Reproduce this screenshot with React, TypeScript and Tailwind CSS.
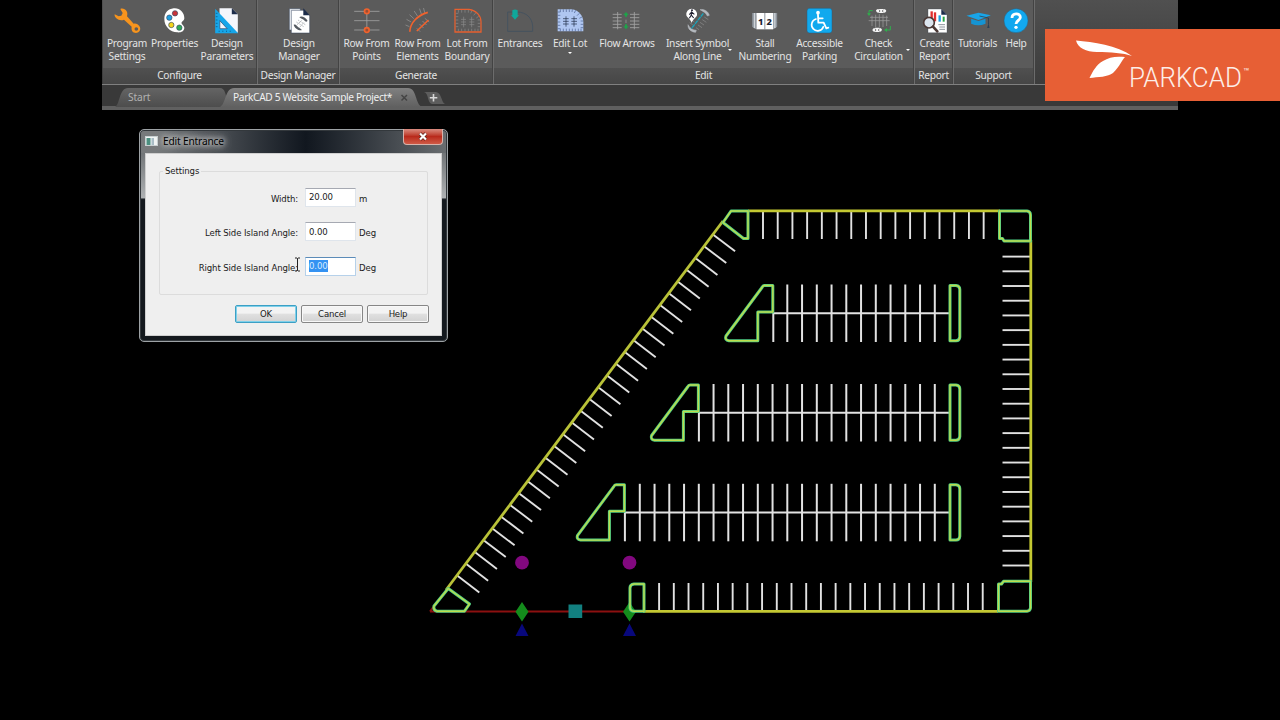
import React from "react";

type Drawing = { vx: number; children?: React.ReactNode };

/* Ribbon glyphs share a 90x84 drawing grid shown at 30x28. */
function Glyph({ vx, children }: Drawing) {
  return (
    <svg width="30" height="28" viewBox={`${vx} 18 90 84`} className="block shrink-0 overflow-visible" fill="none">
      {children}
    </svg>
  );
}

const ticks = (n: number) => Array.from({ length: n }, (_, i) => i);

function Tool({
  width,
  lines,
  caret,
  children,
}: {
  width: string;
  lines: string[];
  caret?: "below" | "side";
  children: React.ReactNode;
}) {
  return (
    <div className={`relative flex shrink-0 flex-col items-center pt-1.5 ${width}`}>
      {children}
      <div className="mt-[3px] flex flex-col items-center text-[10.2px] leading-[13px] tracking-[-0.24px] whitespace-nowrap text-[#e4e4e4]">
        {lines.map((l) => (
          <span key={l}>{l}</span>
        ))}
      </div>
      {caret === "below" && (
        <span className="mt-[2px] border-x-[2.5px] border-t-[2.5px] border-x-transparent border-t-white" />
      )}
      {caret === "side" && (
        <span className="absolute top-[49px] right-[3px] border-x-[2.5px] border-t-[2.5px] border-x-transparent border-t-white" />
      )}
    </div>
  );
}

function Panel({ title, width, children }: { title: string; width: string; children: React.ReactNode }) {
  return (
    <div className={`flex h-[84px] shrink-0 flex-col border-r border-[#6c6c6c] ${width}`}>
      <div className="flex h-[68px] border-r border-[#434343] bg-[#5b5b5b]">{children}</div>
      <div className="flex h-4 items-center justify-center border-r border-[#434343] bg-linear-to-b from-[#505050] to-[#464646] text-[10.2px] tracking-[-0.3px] whitespace-nowrap text-[#e4e4e4]">
        {title}
      </div>
    </div>
  );
}

function Ribbon() {
  return (
    <div className="flex h-[84px] bg-linear-to-b from-[#505050] to-[#3c3c3c] pl-px">
      <Panel title="Configure" width="w-[155px]">
        <Tool width="w-12" lines={["Program", "Settings"]}>
          <Glyph vx={36}>
            <path
              d="M61 27 C67 24 76 27 80 34 C83 39 82 45 81 49 L101 71 C108 69 117 74 120 82 C123 92 116 99 108 99 C98 98 93 91 95 80 L72 59 C65 62 55 61 49 55 C45 51 43 47 44 43 L56 49 L64 47 L68 39 Z"
              fill="#f7941d"
            />
            <circle cx="109" cy="87" r="5.5" fill="#5b5b5b" />
          </Glyph>
        </Tool>
        <Tool width="w-[47px]" lines={["Properties"]}>
          <Glyph vx={177}>
            <path
              d="M218 25 C236 23 250 37 250 55 C250 61 245 63 242 67 C239 73 250 76 250 84 C249 95 239 98 229 97 C207 96 190 79 190 57 C190 39 201 27 218 25Z"
              fill="#fff"
            />
            <circle cx="222" cy="40" r="8" fill="#c93439" stroke="#374a63" strokeWidth="2" />
            <circle cx="205" cy="53" r="8" fill="#1e9fe0" stroke="#374a63" strokeWidth="2" />
            <circle cx="211" cy="75" r="8" fill="#f3d41b" stroke="#374a63" strokeWidth="2" />
            <circle cx="235" cy="83" r="8" fill="#2eaa57" stroke="#374a63" strokeWidth="2" />
          </Glyph>
        </Tool>
        <Tool width="w-[58px]" lines={["Design", "Parameters"]}>
          <Glyph vx={334.5}>
            <path d="M357 25H394L412 43V98H357Z" fill="#f4f6fb" />
            <path d="M394 25L412 43H394Z" fill="#1c2c4a" />
            <path d="M344 26L413 100H344Z" fill="#16a6e9" />
            <path d="M358 62L380 86H358Z" fill="#f4f6fb" stroke="#24466e" strokeWidth="2" />
            <path d="M346 40h5M346 50h5M346 60h5M346 70h5M346 80h5M356 96v-4M367 96v-4M378 96v-4M389 96v-4" stroke="#0d4f78" strokeWidth="2" />
          </Glyph>
        </Tool>
      </Panel>
      <Panel title="Design Manager" width="w-[82px]">
        <Tool width="w-[82px]" lines={["Design", "Manager"]}>
          <Glyph vx={551}>
            <path d="M567 26H600V90H567Z" fill="#eef1f6" stroke="#33415a" strokeWidth="1.5" />
            <path d="M573 31H612L628 47V99H573Z" fill="#fff" stroke="#33415a" strokeWidth="1.5" />
            <path d="M609 25L628 46H609Z" fill="#1c2c4a" />
            <path d="M597 52C602 46 615 52 621 61C622 67 616 66 613 62C608 56 600 56 597 52Z" fill="#565b62" />
            <path d="M580 74C582 82 590 91 603 91C607 89 600 86 596 83C590 80 588 72 580 74Z" fill="#565b62" />
            <path d="M588 66L610 80M593 60L615 74M590 74L606 60M598 82L612 66" stroke="#9a9ea4" strokeWidth="2" strokeDasharray="5 2" />
          </Glyph>
        </Tool>
      </Panel>
      <Panel title="Generate" width="w-[154px]">
        <Tool width="w-[53px]" lines={["Row From", "Points"]}>
          <Glyph vx={49.5}>
            <path d="M56 34H132M56 62H132M56 90H132M94 34V90" stroke="#a3a3a3" strokeWidth="2.4" />
            <circle cx="94" cy="34" r="7" fill="#9b4d33" stroke="#f0622d" strokeWidth="5" />
            <circle cx="94" cy="90" r="7" fill="#9b4d33" stroke="#f0622d" strokeWidth="5" />
          </Glyph>
        </Tool>
        <Tool width="w-[49px]" lines={["Row From", "Elements"]}>
          <Glyph vx={202.5}>
            <path
              d="M222 80L210 75M227 66L213 58M235 56L222 44M246 48L236 33M258 43L252 26M268 39L264 24M281 66L268 55M273 75L261 63M264 84L252 72M254 95L244 85"
              stroke="#8f8f8f"
              strokeWidth="2.4"
            />
            <path d="M223 95C224 68 246 46 277 37M244 93L279 60" stroke="#f0622d" strokeWidth="5" />
          </Glyph>
        </Tool>
        <Tool width="w-[50px]" lines={["Lot From", "Boundary"]}>
          <Glyph vx={351}>
            <path
              d="M370 30v8M380 30v8M390 30v8M400 30v8M411 32l-4 8M422 39l-6 7M431 49l-7 5M370 94v-8M380 94v-8M390 94v-8M400 94v-8M410 94v-8M420 94v-8M429 94v-8M362 40h8M362 50h8M362 60h8M362 70h8M362 80h8M436 60h-8M436 70h-8M436 80h-8M378 58h15M378 66h15M378 74h15M403 58h15M403 66h15M403 74h15M386 50v32M410 50v32"
              stroke="#8d8d8d"
              strokeWidth="2"
            />
            <path d="M360 28H402C424 31 438 47 438 65V96H360Z" stroke="#e8602f" strokeWidth="3.8" />
          </Glyph>
        </Tool>
      </Panel>
      <Panel title="Edit" width="w-[421px]">
        <Tool width="w-[52px]" lines={["Entrances"]}>
          <Glyph vx={510}>
            <path d="M533 36H518V94H593V78C591 53 574 37 547 36" stroke="#44525f" strokeWidth="2.8" />
            <path d="M532 31Q540 26 548 31V46H552L540 59L528 46H532Z" fill="#10a89b" />
          </Glyph>
        </Tool>
        <Tool width="w-12" lines={["Edit Lot"]} caret="below">
          <Glyph vx={30}>
            <path d="M38 28H80C103 31 115 49 115 67V94H38Z" fill="#afc6f1" />
            <path
              d="M46 28v8M55 28v8M64 28v8M73 28v8M82 28l-1 8M92 31l-4 8M103 40l-7 7M111 51l-8 4M46 94v-8M55 94v-8M64 94v-8M73 94v-8M82 94v-8M91 94v-8M100 94v-8M108 94v-8M38 36h8M38 46h8M38 56h8M38 66h8M38 76h8M38 86h8M115 63h-8M115 73h-8M115 83h-8"
              stroke="#475d8c"
              strokeWidth="2"
            />
            <path d="M54 56h17M54 64h17M54 72h17M79 56h17M79 64h17M79 72h17M63 49v31M87 49v31" stroke="#28344f" strokeWidth="2.2" />
          </Glyph>
        </Tool>
        <Tool width="w-[66px]" lines={["Flow Arrows"]}>
          <Glyph vx={201}>
            <path
              d="M203 43h27M203 53h27M203 63h27M203 73h27M203 83h27M255 43h28M255 53h28M255 63h28M255 73h28M255 83h28M218 36v52M268 36v52"
              stroke="#a2a2a2"
              strokeWidth="2.6"
            />
            <path d="M243 59v10" stroke="#a2a2a2" strokeWidth="2" />
            <path d="M243 36L251 45H246V50H240V45H235ZM243 88L251 79H246V73H240V79H235Z" fill="#1fa24a" />
          </Glyph>
        </Tool>
        <Tool width="w-[75px]" lines={["Insert Symbol", "Along Line"]} caret="side">
          <Glyph vx={411}>
            <path d="M462 29C474 26 487 34 490 46L484 48C480 39 473 35 462 29ZM426 74C431 85 441 90 451 91L449 97C436 96 425 88 426 74Z" fill="#b4b9bf" stroke="#b4b9bf" strokeWidth="1.5" />
            <path d="M475 51l12 8M469 59l12 8M462 67l12 8M456 75l12 8M450 83l9 6M431 68l9 6M437 60l8 6" stroke="#858585" strokeWidth="2.4" />
            <path d="M472 40L436 86" stroke="#1ba5bd" strokeWidth="4" strokeDasharray="12 2" />
            <path d="M437 26A17 17 0 0 1 453 46C450 54 441 57 437 69C433 57 424 54 421 46A17 17 0 0 1 437 26Z" fill="#fff" />
            <circle cx="438" cy="31" r="3" fill="#223" />
            <path d="M437 35L436 45L443 54M436 45L430 55M430 44L437 36L445 43" stroke="#223" strokeWidth="3.4" />
          </Glyph>
        </Tool>
        <Tool width="w-[60px]" lines={["Stall", "Numbering"]}>
          <Glyph vx={613.5}>
            <path d="M620 39H695V80Q688 86 682 88V46H633V88Q626 86 620 80Z" fill="#8d949c" />
            <path d="M627 39V84M688 39V84" stroke="#cfd4d9" strokeWidth="4" />
            <rect x="633" y="39" width="50" height="49" fill="#fff" />
            <path d="M658 39V88" stroke="#555c68" strokeWidth="2" />
            <text x="645.500" y="75" textAnchor="middle" fontSize="28" fontWeight="800" fill="#1c2433">1</text>
            <text x="671" y="75" textAnchor="middle" fontSize="28" fontWeight="800" fill="#1c2433">2</text>
          </Glyph>
        </Tool>
        <Tool width="w-[49px]" lines={["Accessible", "Parking"]}>
          <Glyph vx={75}>
            <rect x="81" y="25" width="75" height="74" rx="8" fill="#11a9ee" stroke="#2b5f7c" strokeWidth="1.5" />
            <circle cx="114" cy="38" r="5.5" fill="#fff" />
            <path d="M114 44L115 68H131L139 85L145 83M115 55H128" stroke="#fff" strokeWidth="5.5" strokeLinejoin="round" strokeLinecap="round" />
            <path d="M108 57A18 18 0 1 0 130 80" stroke="#fff" strokeWidth="5" strokeLinecap="round" />
          </Glyph>
        </Tool>
        <Tool width="w-[69px]" lines={["Check", "Circulation"]} caret="side">
          <Glyph vx={252}>
            <path d="M266 62h63M276 47v31M287 44v37M298 42v39M309 44v37M320 47v31M270 52h54" stroke="#9c9c9c" strokeWidth="2.2" />
            <path d="M278 32H267V42M331 78V90H319" stroke="#2fae4c" strokeWidth="3" />
            <path d="M261 40H273L267 48ZM321 84V96L312 90Z" fill="#2fae4c" />
            <path d="M288 31Q291 26 300 27H312Q319 29 319 33Q318 38 311 39H298Q289 39 288 31ZM277 90Q278 84 286 83H298Q305 85 306 89Q305 95 298 96H284Q278 95 277 90Z" fill="#f6f6f6" />
            <path d="M297 29L300 33L297 37M310 29L307 33L310 37M285 86L288 90L285 94M298 86L295 90L298 94" stroke="#333" strokeWidth="2" />
          </Glyph>
        </Tool>
      </Panel>
      <Panel title="Report" width="w-[39px]">
        <Tool width="w-[39px]" lines={["Create", "Report"]}>
          <Glyph vx={420}>
            <path d="M444 27H484L501 44V98H444Z" fill="#fff" stroke="#3a4350" strokeWidth="1" />
            <path d="M484 27L501 44H484Z" fill="#1c2c4a" />
            <path d="M455 34V56" stroke="#e02f2f" strokeWidth="7" />
            <path d="M465 37V64" stroke="#e02f2f" strokeWidth="7" />
            <path d="M479 46V65" stroke="#1d9de0" strokeWidth="7" />
            <path d="M491 50V65" stroke="#28a745" strokeWidth="6" />
            <path d="M475 74h20M478 81h17M478 88h17" stroke="#8e949d" strokeWidth="3" />
            <circle cx="447" cy="68" r="16" fill="#dce5ee" stroke="#4c3a37" strokeWidth="5" />
            <path d="M459 80L472 94" stroke="#4c3a37" strokeWidth="8" strokeLinecap="round" />
          </Glyph>
        </Tool>
      </Panel>
      <Panel title="Support" width="w-[81px]">
        <Tool width="w-[47px]" lines={["Tutorials"]}>
          <Glyph vx={550.5}>
            <path d="M575 56V71Q596 81 618 71V56L597 63Z" fill="#1594d3" />
            <path d="M561 47L597 38L634 46L597 60Z" fill="#19a5e8" />
            <path d="M600 48L627 54V73" stroke="#2b3f52" strokeWidth="2.4" />
            <path d="M627 70L630 84H623Z" fill="#2b3f52" />
          </Glyph>
        </Tool>
        <Tool width="w-[30px]" lines={["Help"]}>
          <Glyph vx={666}>
            <circle cx="711" cy="62" r="36" fill="#12a8ef" stroke="#2b5f7c" strokeWidth="1.5" />
            <path d="M699 54C699 38 724 38 724 52C724 62 711 61 711 72" stroke="#fff" strokeWidth="8.5" />
            <circle cx="711" cy="82" r="5" fill="#fff" />
          </Glyph>
        </Tool>
      </Panel>
    </div>
  );
}

function TabBar() {
  return (
    <div className="flex h-[26px] flex-col border-t border-[#808080] bg-[#393939]">
      <div className="relative flex h-[21px] pt-[3px]">
        <svg width="360" height="19" viewBox="0 0 360 19" className="absolute left-0 top-[3px]">
          <defs>
            <linearGradient id="tabIdle" x1="0" y1="0" x2="0" y2="1">
              <stop offset="0" stopColor="#646464" />
              <stop offset="1" stopColor="#4d4d4d" />
            </linearGradient>
            <linearGradient id="tabLive" x1="0" y1="0" x2="0" y2="1">
              <stop offset="0" stopColor="#808080" />
              <stop offset="1" stopColor="#606060" />
            </linearGradient>
          </defs>
          <path d="M13 19C18 17 17 0 26 0H118C123 0 124 6 126 19Z" fill="url(#tabIdle)" />
          <path d="M118 19C124 16 123 0 132 0H306C315 0 313 16 320 19Z" fill="url(#tabLive)" />
          <path d="M322 4H334C340 5 339 14 343 16H330C325 15 327 5 322 4Z" fill="#5d5d5d" />
          <path d="M331.500 6V13.500M327.800 9.750H335.300" stroke="#d8d8d8" strokeWidth="1.6" />
          <path d="M299.500 7L305 12.500M305 7L299.500 12.500" stroke="#444" strokeWidth="1.5" />
        </svg>
        <span className="relative ml-[26px] w-[105px] text-[10.2px] leading-[18px] tracking-[-0.1px] text-[#b2b2b2]">Start</span>
        <span className="relative text-[10.2px] leading-[18px] tracking-[-0.36px] whitespace-nowrap text-[#f0f0f0]">
          ParkCAD 5 Website Sample Project*
        </span>
      </div>
      <div className="h-1 bg-[#606060]" />
    </div>
  );
}

function Island({ d }: { d: string }) {
  return (
    <>
      <path d={d} stroke="#4fcf86" strokeWidth="3" strokeLinejoin="round" />
      <path d={d} stroke="#bddc4c" strokeWidth="1.4" strokeLinejoin="round" />
    </>
  );
}

const PITCH = 14.71;
const rows = [
  { dx: 0, dy: 0, n: 11 },
  { dx: -74.4, dy: 99.5, n: 16 },
  { dx: -148.4, dy: 199.3, n: 21 },
];

function LotDrawing() {
  return (
    <svg width="1280" height="610" viewBox="0 110 1280 610" className="block" fill="none">
      <path d="M430 611.500H632M430 611.500L437 602" stroke="#8c1010" strokeWidth="2" />
      <g stroke="#e2e2e2" strokeWidth="1.9">
        {ticks(16).map((i) => (
          <path key={`t${i}`} d={`M${763 + i * PITCH} 211V239`} />
        ))}
        {ticks(22).map((i) => (
          <path key={`r${i}`} d={`M1002.500 ${256.6 + i * PITCH}H1030`} />
        ))}
        {ticks(23).map((i) => (
          <path key={`b${i}`} d={`M${659.1 + i * PITCH} 583V611`} />
        ))}
        {ticks(30).map((i) => (
          <path key={`s${i}`} d={`M${457.5 + i * 8.82} ${575.7 - i * 11.76}l21.800 16.700`} />
        ))}
      </g>
      <path d="M446 590L723 221" stroke="#b9c238" strokeWidth="2.8" />
      <path d="M748 210.800H1000M1030.800 240V582M643 611.300H998" stroke="#c3c832" strokeWidth="2.8" />
      {rows.map((r) => (
        <g key={r.n}>
          <g stroke="#e2e2e2" strokeWidth="2">
            <path d={`M${773 + r.dx} ${313.2 + r.dy}H949`} />
            <path d={`M${773.3 + r.dx} ${313 + r.dy}v29`} />
            {ticks(r.n).map((i) => (
              <path key={i} d={`M${934.8 - i * 14.75} ${284.5 + r.dy}v57.500`} />
            ))}
          </g>
          <g transform={`translate(${r.dx} ${r.dy})`}>
            <Island d="M764.500 285.500H772.800V312H757.800V340.800H729Q724.500 340 726 336L762 287.500Q763 285.500 764.500 285.500Z" />
          </g>
          <g transform={`translate(0 ${r.dy})`}>
            <Island d="M950 285.500H956Q959.800 286 959.800 289.500V337Q959.500 340.500 956 340.800H950Z" />
          </g>
        </g>
      ))}
      <Island d="M731 211H748V238.500H743.500L723 222.500Z" />
      <Island d="M999.500 211H1027Q1030.500 211.500 1030.500 215V241H1004L1002.500 238.500H999.500Z" />
      <Island d="M998.500 584H1001.500L1003.500 581.300H1030.500V608Q1030 611 1027 611.300H998.500Z" />
      <path
        d="M522 602L528.500 611.700L522 621.500L515.500 611.700ZM629.500 602L636 611.700L629.500 621.500L623 611.700Z"
        fill="#148c1c"
      />
      <Island d="M448.200 588.500L469.500 604L464.500 611.200H437Q433 610 434 606Z" />
      <Island d="M644 584H634Q630 584.500 630 588V608Q630.500 611.200 634 611.200H644Z" />
      <circle cx="522" cy="562.700" r="6.9" fill="#82087f" />
      <circle cx="629.500" cy="562.700" r="6.9" fill="#82087f" />
      <rect x="568.500" y="604.500" width="13.700" height="13.500" fill="#128080" />
      <path d="M522 623.500L528.500 636H515.500ZM629.500 623.500L636 636H623Z" fill="#08087c" />
    </svg>
  );
}

function Field({ label, value, unit, selected }: { label: string; value: string; unit: string; selected?: boolean }) {
  return (
    <div className="flex h-[19px] items-start">
      <span className="w-[138px] pt-1 text-right leading-[13px] whitespace-nowrap">{label}</span>
      <div
        className={`ml-[7px] h-[19px] w-[51px] border bg-white pt-[1.5px] pl-[3px] leading-[13px] ${
          selected ? "border-[#b6d1ea] border-t-[#5b8bb8]" : "border-[#dfe5ec] border-t-[#a6a9b2]"
        }`}
      >
        <span className={selected ? "inline-block h-[12px] bg-[#3492f2] leading-[12px] text-[#d6eaff]" : "inline-block h-[12px] leading-[12px]"}>
          {value}
        </span>
      </div>
      <span className="pt-1 pl-[3px] leading-[13px]">{unit}</span>
    </div>
  );
}

function DialogButton({ text, primary }: { text: string; primary?: boolean }) {
  return (
    <button
      className={`flex h-[18px] w-[62px] items-center justify-center rounded-[2px] border bg-linear-to-b from-[#f3f3f3] from-45% via-[#e0e0e0] via-50% to-[#d2d2d2] tracking-[-0.2px] ${
        primary ? "border-[#3c9fc4] shadow-[inset_0_0_0_1px_#7fd0ea]" : "border-[#868686] shadow-[inset_0_0_0_1px_#f8f8f8]"
      }`}
    >
      {text}
    </button>
  );
}

function EditEntranceDialog() {
  return (
    <div className="absolute top-[129px] left-[139px] flex h-[213px] w-[309px] flex-col rounded-[5px] border border-[#9da2a5] bg-linear-to-b from-[#54585b] from-0% via-[#aeb1b3] via-32% to-[#14191e] to-33% px-[5px] pb-[5px] shadow-[inset_0_0_0_1px_#33383c]">
      <div className="-mx-[4px] mt-px flex h-[22px] items-start rounded-t-[3px] bg-linear-to-r from-[#777a7c] from-5% via-[#11171f] via-54% to-[#696d70]">
        <svg width="13" height="10" viewBox="0 0 13 10" className="mt-[5px] ml-[4px]">
          <rect x="0.5" y="0.5" width="12" height="9" fill="#f1f5f5" stroke="#c8d0d2" />
          <rect x="1.5" y="2" width="4" height="7" fill="#4b8f80" />
          <rect x="6.5" y="2" width="2.5" height="7" fill="#a9bdc7" />
        </svg>
        <span className="ml-[5px] text-[10.2px] leading-[20px] tracking-[-0.18px] text-black [text-shadow:0_0_5px_#e0e0e0,0_0_7px_#ccc,0_0_10px_#bbb,0_0_12px_#aaa]">
          Edit Entrance
        </span>
        <div className="-mt-[2px] mr-[3px] ml-auto flex h-4 w-10 items-center justify-center rounded-b-[4px] border border-t-0 border-[#d8b3ab] bg-linear-to-b from-[#d98b7f] from-0% via-[#b9291b] via-50% to-[#cf5945]">
          <svg width="10" height="9" viewBox="0 0 10 9">
            <path d="M2 1.500L8 7.500M8 1.500L2 7.500" stroke="#5c2019" strokeWidth="3.6" />
            <path d="M2 1.500L8 7.500M8 1.500L2 7.500" stroke="#fff" strokeWidth="2.2" />
          </svg>
        </div>
      </div>
      <div className="flex grow flex-col border border-[#cfcfcf] bg-[#efefef] px-[13px] pt-[17px] font-['DejaVu_Sans_Condensed','DejaVu_Sans',sans-serif] text-[9.5px] tracking-[-0.1px] text-[#1a1a1a]">
        <div className="relative flex h-[124px] w-[269px] flex-col gap-[15.5px] rounded-[2px] border border-[#dcdcdc] pt-[15.5px]">
          <span className="absolute -top-[8px] left-[3px] bg-[#efefef] px-[2px] leading-[14px]">Settings</span>
          <Field label="Width:" value="20.00" unit="m" />
          <Field label="Left Side Island Angle:" value="0.00" unit="Deg" />
          <Field label="Right Side Island Angle:" value="0.00" unit="Deg" selected />
          <svg width="7" height="15" viewBox="0 0 7 15" className="absolute top-[85px] left-[134px]">
            <path d="M1 1H3L3.500 1.500L4 1H6M3.500 1.500V13.500M1 14H3L3.500 13.500L4 14H6" stroke="#222" fill="none" />
          </svg>
        </div>
        <div className="-mr-[1px] mt-[10px] flex justify-end gap-[4px]">
          <DialogButton text="OK" primary />
          <DialogButton text="Cancel" />
          <DialogButton text="Help" />
        </div>
      </div>
    </div>
  );
}

function Brand() {
  return (
    <div className="absolute top-[29px] left-[1045px] flex h-[72px] w-[235px] bg-[#e75f35]">
      <svg width="58" height="40" viewBox="0 0 58 40" className="mt-[11px] ml-[30px] shrink-0" fill="#fff">
        <path d="M1 0.500C18 2 42 5 57 16C48 13 36 12 22 12C11 12 3 8 1 0.500Z" />
        <path d="M50 17C47 20 45 26 38 33C33 37 23 37 14.500 38C18 31 21 25 28 21C34 17 41 16 50 17Z" />
      </svg>
      <span className="-ml-[4px] mt-[31px] h-9 origin-left scale-x-[0.96] font-[Roboto] text-[27px] leading-[37px] font-light text-[#fdeee8]">
        PARKCAD
      </span>
      <span className="mt-[38px] -ml-[3px] font-[Roboto] text-[10px] leading-[10px] text-[#fdeee8]">™</span>
    </div>
  );
}

export default function App() {
  return (
    <div className="relative flex h-[720px] w-[1280px] flex-col overflow-hidden bg-black font-['Noto_Sans',sans-serif]">
      <header className="ml-[102px] flex h-[110px] w-[1076px] flex-col">
        <Ribbon />
        <TabBar />
      </header>
      <main>
        <LotDrawing />
      </main>
      <EditEntranceDialog />
      <Brand />
    </div>
  );
}
